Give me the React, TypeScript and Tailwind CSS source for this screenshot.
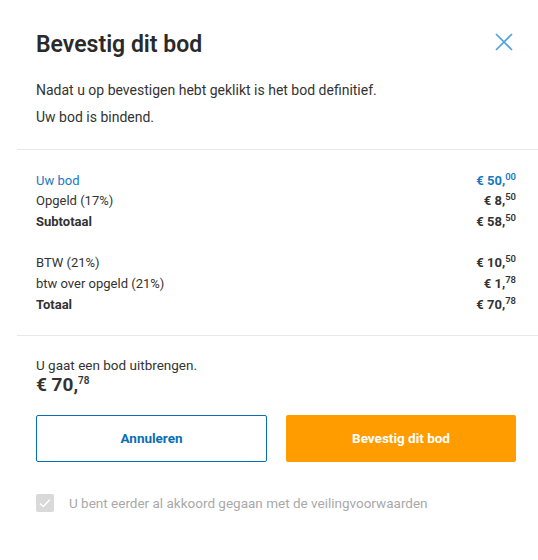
import React from "react";

const font = { fontFamily: "Roboto, 'Liberation Sans', sans-serif" };

function Amount({ whole, cents, className = "" }: { whole: string; cents: string; className?: string }) {
  return (
    <span className={"font-bold whitespace-nowrap " + className}>
      € {whole},<span className="relative -top-[5px] text-[9.5px] font-semibold">{cents}</span>
    </span>
  );
}

function Row({ label, whole, cents, bold = false, blue = false }: { label: string; whole: string; cents: string; bold?: boolean; blue?: boolean }) {
  return (
    <div className={"flex justify-between items-center h-[20.7px] text-[13px] " + (blue ? "text-[#1a78c2]" : "text-[#333]")}>
      <span className={bold ? "font-bold" : ""}>{label}</span>
      <Amount whole={whole} cents={cents} />
    </div>
  );
}

export default function App() {
  return (
    <div className="w-[538px] h-[560px] bg-white overflow-hidden text-[#333]" style={font}>
      <div className="pl-[36px] pr-[22px] pt-[30px]">
        <div className="flex justify-between items-start">
          <h1 className="text-[23px] font-semibold leading-[30px] text-[#2a2a2a]">Bevestig dit bod</h1>
          <button className="mt-[3px] mr-[3px] text-[#4aa3dc]">
            <svg width="18" height="18" viewBox="0 0 18 18" fill="none" stroke="currentColor" strokeWidth="1.6">
              <path d="M1 1L17 17M17 1L1 17" />
            </svg>
          </button>
        </div>
        <p className="mt-[17px] text-[14px] leading-[27px]">Nadat u op bevestigen hebt geklikt is het bod definitief.</p>
        <p className="text-[14px] leading-[27px]">Uw bod is bindend.</p>
      </div>
      <div className="ml-[17px] mt-[18px] border-t border-[#e8e8e8]" />
      <div className="pl-[36px] pr-[22px] pt-[20px] pb-[20px]">
        <Row label="Uw bod" whole="50" cents="00" blue />
        <Row label="Opgeld (17%)" whole="8" cents="50" />
        <Row label="Subtotaal" whole="58" cents="50" bold />
        <div className="h-[20.7px]" />
        <Row label="BTW (21%)" whole="10" cents="50" />
        <Row label="btw over opgeld (21%)" whole="1" cents="78" />
        <Row label="Totaal" whole="70" cents="78" bold />
      </div>
      <div className="ml-[17px] border-t border-[#e8e8e8]" />
      <div className="pl-[36px] pr-[22px] pt-[20px]">
        <p className="text-[13.5px] leading-[18px]">U gaat een bod uitbrengen.</p>
        <p className="text-[19px] font-bold leading-[22px]">
          € 70,<span className="relative -top-[7px] text-[10px] font-semibold">78</span>
        </p>
        <div className="mt-[16px] flex gap-[19px]">
          <button className="w-[231px] h-[47px] border-[1.5px] border-[#0a6eb4] rounded-[2px] text-[#0a6eb4] text-[13.5px] font-bold">
            Annuleren
          </button>
          <button className="w-[230px] h-[47px] bg-[#ff9c00] rounded-[2px] text-white text-[13.5px] font-bold">
            Bevestig dit bod
          </button>
        </div>
        <div className="mt-[31px] flex items-center gap-[15px]">
          <span className="w-[18px] h-[18px] rounded-[2px] bg-[#d9d9d9] flex items-center justify-center">
            <svg width="12" height="10" viewBox="0 0 12 10" fill="none" stroke="white" strokeWidth="1.3">
              <path d="M1 5.5L4.3 8.5L11 1.5" />
            </svg>
          </span>
          <span className="text-[13.5px] text-[#a9a9a9]">U bent eerder al akkoord gegaan met de veilingvoorwaarden</span>
        </div>
      </div>
    </div>
  );
}
